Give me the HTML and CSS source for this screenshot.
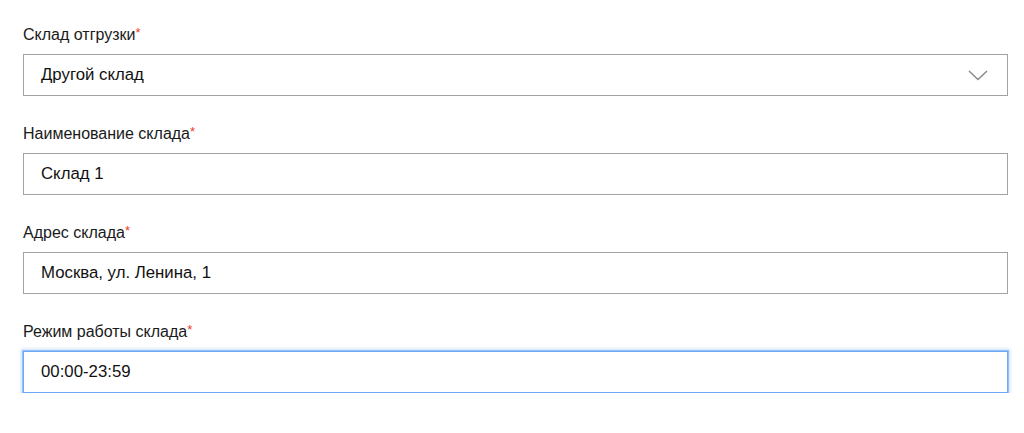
FILE: index.html
```html
<!DOCTYPE html>
<html lang="ru">
<head>
<meta charset="utf-8">
<link rel="stylesheet" href="styles.css">
</head>
<body>
<form class="form">
  <div class="field">
    <label class="label">Склад отгрузки<span class="req">*</span></label>
    <div class="control select">
      <span class="value">Другой склад</span>
      <svg class="chevron" width="20" height="11" viewBox="0 0 20 11"><path d="M1 1 L10 9.5 L19 1" fill="none" stroke="#8a8a8a" stroke-width="1.5"/></svg>
    </div>
  </div>
  <div class="field">
    <label class="label">Наименование склада<span class="req">*</span></label>
    <div class="control"><span class="value">Склад 1</span></div>
  </div>
  <div class="field">
    <label class="label">Адрес склада<span class="req">*</span></label>
    <div class="control"><span class="value">Москва, ул. Ленина, 1</span></div>
  </div>
  <div class="field">
    <label class="label">Режим работы склада<span class="req">*</span></label>
    <div class="control focused"><span class="value">00:00-23:59</span></div>
  </div>
</form>
</body>
</html>
```
FILE: styles.css
```css
html, body { margin: 0; background: #fff; }
body {
  font-family: "Liberation Sans", Arial, sans-serif;
  color: #111;
}
.form {
  padding: 25px 16px 0 23px;
  display: flex;
  flex-direction: column;
  gap: 28px;
}
.field { display: flex; flex-direction: column; gap: 9px; }
.label {
  font-size: 16px;
  line-height: 20px;
  height: 20px;
  color: #1a1a1a;
}
.req { color: #e8411d; font-size: 13px; line-height: 0; vertical-align: 3px; }
.control {
  height: 42px;
  box-sizing: border-box;
  border: 1px solid #a3a3a3;
  display: flex;
  align-items: center;
  padding: 0 17px;
  font-size: 16.8px;
  color: #111;
}
.select { justify-content: space-between; padding-right: 19px; }
.focused {
  border-color: #6fa8f4;
  box-shadow: 0 0 0 1px #94c0f7, 0 0 3px 2px rgba(120,174,245,0.4);
}
```
